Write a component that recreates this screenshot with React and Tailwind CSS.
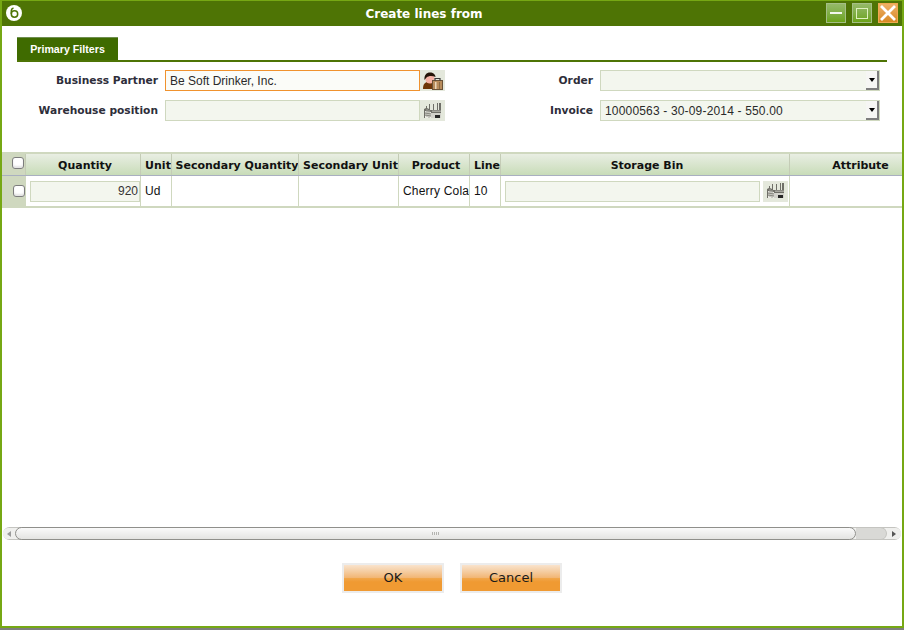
import React from 'react';

const dejavu = 'font-["DejaVu_Sans",sans-serif]';

// Business partner lookup icon: person with briefcase
const PartnerIcon = () => (
  <svg width="22" height="20" viewBox="0 0 22 20">
    <path d="M1 18c0-5 2-7 5-7h5l2 2v5z" fill="#6e3608" />
    <circle cx="8" cy="8" r="4.600" fill="#f6b3a6" />
    <path d="M2.500 9C2 4 4.500 1.500 8 1.500c3 0 5.500 2 5.500 4.500-3-1.500-7-1.500-9 .5-.7.8-1.300 1.500-2 2.500z" fill="#241408" />
    <rect x="10.500" y="9.500" width="10" height="9" fill="#b88c5c" stroke="#6a5238" strokeWidth="1" />
    <path d="M13 9.500V7.500h5v2" fill="none" stroke="#3a3a3a" strokeWidth="1.200" />
    <rect x="13" y="11" width="1.500" height="7" fill="#e9d6bb" />
    <rect x="17" y="11" width="1" height="7" fill="#8a6a44" />
  </svg>
);

// Warehouse lookup icon: factory with chimneys
const WarehouseIcon = () => (
  <svg width="20" height="18" viewBox="0 0 20 18">
    <path d="M1 7l2-1V4h1v2l2 1V2h1v6l3 0V2h1v6h3V1h1v7h1V1h2v15H1z" fill="#6f6f68" />
    <path d="M2 9l6 1v6H2z" fill="#ecece6" />
    <path d="M8 11h10v5H8z" fill="#d2d2cb" />
    <path d="M2 11l6 1M2 13l6 1" stroke="#6b6b64" strokeWidth="1" />
    <path d="M4 7v8M6 8v8" stroke="#a2a29a" strokeWidth="1" />
    <rect x="12" y="13" width="5" height="3" fill="#262626" />
    <rect x="9" y="8.500" width="9" height="1.500" fill="#a5a59d" />
  </svg>
);

const Logo = () => (
  <svg width="16" height="16" viewBox="0 0 16 16">
    <circle cx="8" cy="8" r="8" fill="#fff" />
    <circle cx="8.500" cy="9" r="3.200" fill="none" stroke="#4e7405" strokeWidth="1.500" />
    <path d="M5.300 9V5.500C5.300 4.300 6 3.400 7.500 3" fill="none" stroke="#4e7405" strokeWidth="1.500" />
  </svg>
);

const WindowButton = ({ children, orange }) => (
  <div
    className={
      orange
        ? 'w-5 h-5 flex items-center justify-center border border-[#f0a850] bg-gradient-to-b from-[#eeb066] to-[#d88a20]'
        : 'w-5 h-5 flex items-center justify-center border border-[#a4bf86] bg-gradient-to-b from-[#95b968] to-[#6ca414]'
    }
  >
    {children}
  </div>
);

const Label = ({ children, className }) => (
  <label className={`${dejavu} text-[10.67px] font-bold pt-px text-[#2e2e3a] text-right shrink-0 ${className}`}>
    {children}
  </label>
);

const Field = ({ value, focused, className }) => (
  <div
    className={
      'h-[21px] flex items-center px-1 text-[12px] text-[#2a2a2a] font-["Liberation_Sans",sans-serif] border ' +
      (focused ? 'bg-[#fbfcf8] border-[#f0922e] ' : 'bg-[#f3f6ee] border-[#cfd8bf] ') +
      className
    }
  >
    {value}
  </div>
);

const IconButton = ({ children }) => (
  <div className="w-[25px] h-[21px] flex items-center justify-center bg-[#e4e8dc]">{children}</div>
);

const Select = ({ value }) => (
  <div className="w-[280px] h-[21px] flex items-center justify-between pl-1 text-[12px] tracking-[0.17px] text-[#2a2a2a] font-['Liberation_Sans',sans-serif] bg-[#f3f6ee] border border-[#cfd8bf]">
    <span>{value}</span>
    <div className="w-[13px] h-[19px] flex items-center justify-center bg-[#f6f6f4] border-r-2 border-b-2 border-r-[#7e7e7e] border-b-[#7e7e7e]">
      <div className="w-0 h-0 border-x-[3px] border-x-transparent border-t-[4px] border-t-black" />
    </div>
  </div>
);

const Checkbox = () => (
  <div className="w-3 h-3 bg-white border border-[#7d7d7d] rounded-[3px] shadow-[inset_0_-2px_2px_#e4e4e4]" />
);

const columns = [
  { name: 'Quantity', width: 'w-[115px]' },
  { name: 'Unit', width: 'w-[31px]' },
  { name: 'Secondary Quantity', width: 'w-[127px]' },
  { name: 'Secondary Unit', width: 'w-[100px]' },
  { name: 'Product', width: 'w-[71px]' },
  { name: 'Line', width: 'w-[31px]' },
  { name: 'Storage Bin', width: 'w-[289px]' },
  { name: 'Attribute', width: 'w-[138px]' },
];

const Cell = ({ width, children, className = '' }) => (
  <div className={`${width} shrink-0 h-full flex items-center border-r border-[#cfd8bf] text-[12px] text-[#111] font-['Liberation_Sans',sans-serif] ${className}`}>
    {children}
  </div>
);

const Grid = () => (
  <div className="mt-[31px] border-y-2 border-[#cfd8bf] overflow-hidden">
    <div className="flex h-[22px] border-b border-[#a9afc0] bg-gradient-to-b from-[#e9eee3] to-[#c8dcb8]">
      <div className="w-[24px] shrink-0 flex items-center justify-end pr-px border-r border-[#c4ccb6] bg-[#cfd8bf] pb-[4px]">
        <Checkbox />
      </div>
      {columns.map((c) => (
        <div
          key={c.name}
          className={`${c.width} shrink-0 flex items-center justify-center pl-1 pt-[3px] border-r border-[#c4ccb6] ${dejavu} text-[11px] font-bold text-[#111] whitespace-nowrap overflow-hidden`}
        >
          {c.name}
        </div>
      ))}
    </div>
    <div className="flex h-[30px]">
      <div className="w-[24px] shrink-0 flex items-center justify-end pr-px pb-px bg-[#cfd8bf]">
        <Checkbox />
      </div>
      <Cell width={columns[0].width} className="pl-[4px]">
        <div className="w-[110px] h-[21px] flex items-center justify-end pr-[1px] bg-[#f3f6ee] border border-[#cfd8bf] text-[#333]">920</div>
      </Cell>
      <Cell width={columns[1].width} className="pl-[4px]">Ud</Cell>
      <Cell width={columns[2].width} />
      <Cell width={columns[3].width} />
      <Cell width={columns[4].width} className="pl-[4px] tracking-[0.2px] whitespace-nowrap overflow-hidden">Cherry Cola</Cell>
      <Cell width={columns[5].width} className="pl-[4px]">10</Cell>
      <Cell width={columns[6].width} className="pl-[4px]">
        <Field className="w-[255px]" />
        <div className="ml-[3px]">
          <IconButton><WarehouseIcon /></IconButton>
        </div>
      </Cell>
      <Cell width={columns[7].width} className="border-r-0" />
    </div>
  </div>
);

const Scrollbar = () => (
  <div className="mx-px h-[13px] flex items-stretch bg-[#f1f1ef] border-y border-[#c4c4c0] rounded-full">
    <div className="w-[12px] flex items-center justify-center bg-[#efefed] rounded-l-full">
      <div className="w-0 h-0 border-y-[3px] border-y-transparent border-r-[4px] border-r-[#9a9a9a]" />
    </div>
    <div className="w-[841px] -my-px flex items-center justify-center bg-gradient-to-b from-[#fafafa] to-[#e4e4e2] border border-[#8f8f8b] rounded-full">
      <div className="w-[8px] h-[3px] bg-[repeating-linear-gradient(90deg,#b4b4b0_0px,#b4b4b0_1px,transparent_1px,transparent_2px)]" />
    </div>
    <div className="flex-1 -my-px bg-[#d9d9d6] border border-l-0 border-[#c4c4c0] rounded-r-full" />
    <div className="w-[14px] flex items-center justify-center bg-[#efefed] rounded-r-full">
      <div className="w-0 h-0 border-y-[3px] border-y-transparent border-l-[4px] border-l-[#555]" />
    </div>
  </div>
);

const DialogButton = ({ children }) => (
  <button className={`w-[102px] h-[30px] border-2 border-[#ececec] ${dejavu} text-[13px] text-[#1a1a1a] bg-[linear-gradient(180deg,#f9e3cc_0%,#f4c898_30%,#f2b777_48%,#f1a548_52%,#f09a32_65%,#f09a32_100%)]`}>
    {children}
  </button>
);

export default function App() {
  return (
    <div className="w-[904px] h-[630px] flex flex-col overflow-hidden bg-white">
      <div className="flex-1 min-h-0 flex flex-col border-x-2 border-t border-b-2 border-[#76a814]">
        {/* title bar */}
        <div className="h-[25px] shrink-0 flex items-start justify-between bg-[#4e7405] pt-[2px] pl-[4px] pr-[4px]">
          <div className="pt-[2px]"><Logo /></div>
          <span className={`${dejavu} text-[12px] font-bold pt-[2px] text-white`}>Create lines from</span>
          <div className="flex gap-[6px]">
            <WindowButton>
              <div className="w-3 h-[2px] bg-white/90" />
            </WindowButton>
            <WindowButton>
              <div className="w-3 h-[11px] border border-[#dff0c0]" />
            </WindowButton>
            <WindowButton orange>
              <svg width="18" height="18" viewBox="0 0 18 18">
                <path d="M2 2l14 14M16 2L2 16" stroke="#fff" strokeWidth="2.800" />
              </svg>
            </WindowButton>
          </div>
        </div>

        {/* tab strip */}
        <div className="mt-[11px] mx-[15px] h-[25px] shrink-0 flex items-end border-b-2 border-[#4e7405]">
          <div className="h-[23px] w-[101px] flex items-center justify-center bg-[#3f6b00] border-t border-[#6f8f50] text-white text-[10.67px] font-bold font-['Liberation_Sans',sans-serif]">
            Primary Filters
          </div>
        </div>

        {/* filters */}
        <div className="mt-2 shrink-0 flex flex-col gap-[9px] pl-[14px]">
          <div className="flex items-center">
            <Label className="w-[142px]">Business Partner</Label>
            <Field value="Be Soft Drinker, Inc." focused className="ml-[7px] w-[255px]" />
            <IconButton><PartnerIcon /></IconButton>
            <Label className="w-[148px]">Order</Label>
            <div className="ml-[7px]"><Select /></div>
          </div>
          <div className="flex items-center">
            <Label className="w-[142px]">Warehouse position</Label>
            <Field className="ml-[7px] w-[255px]" />
            <IconButton><WarehouseIcon /></IconButton>
            <Label className="w-[148px]">Invoice</Label>
            <div className="ml-[7px]"><Select value="10000563 - 30-09-2014 - 550.00" /></div>
          </div>
        </div>

        <Grid />
        <div className="flex-1" />
        <Scrollbar />

        {/* actions */}
        <div className="mt-[23px] mb-[33px] flex justify-center gap-4 shrink-0">
          <DialogButton>OK</DialogButton>
          <DialogButton>Cancel</DialogButton>
        </div>
      </div>
      <div className="h-[2px] shrink-0 bg-[#7e7e7e]" />
    </div>
  );
}
